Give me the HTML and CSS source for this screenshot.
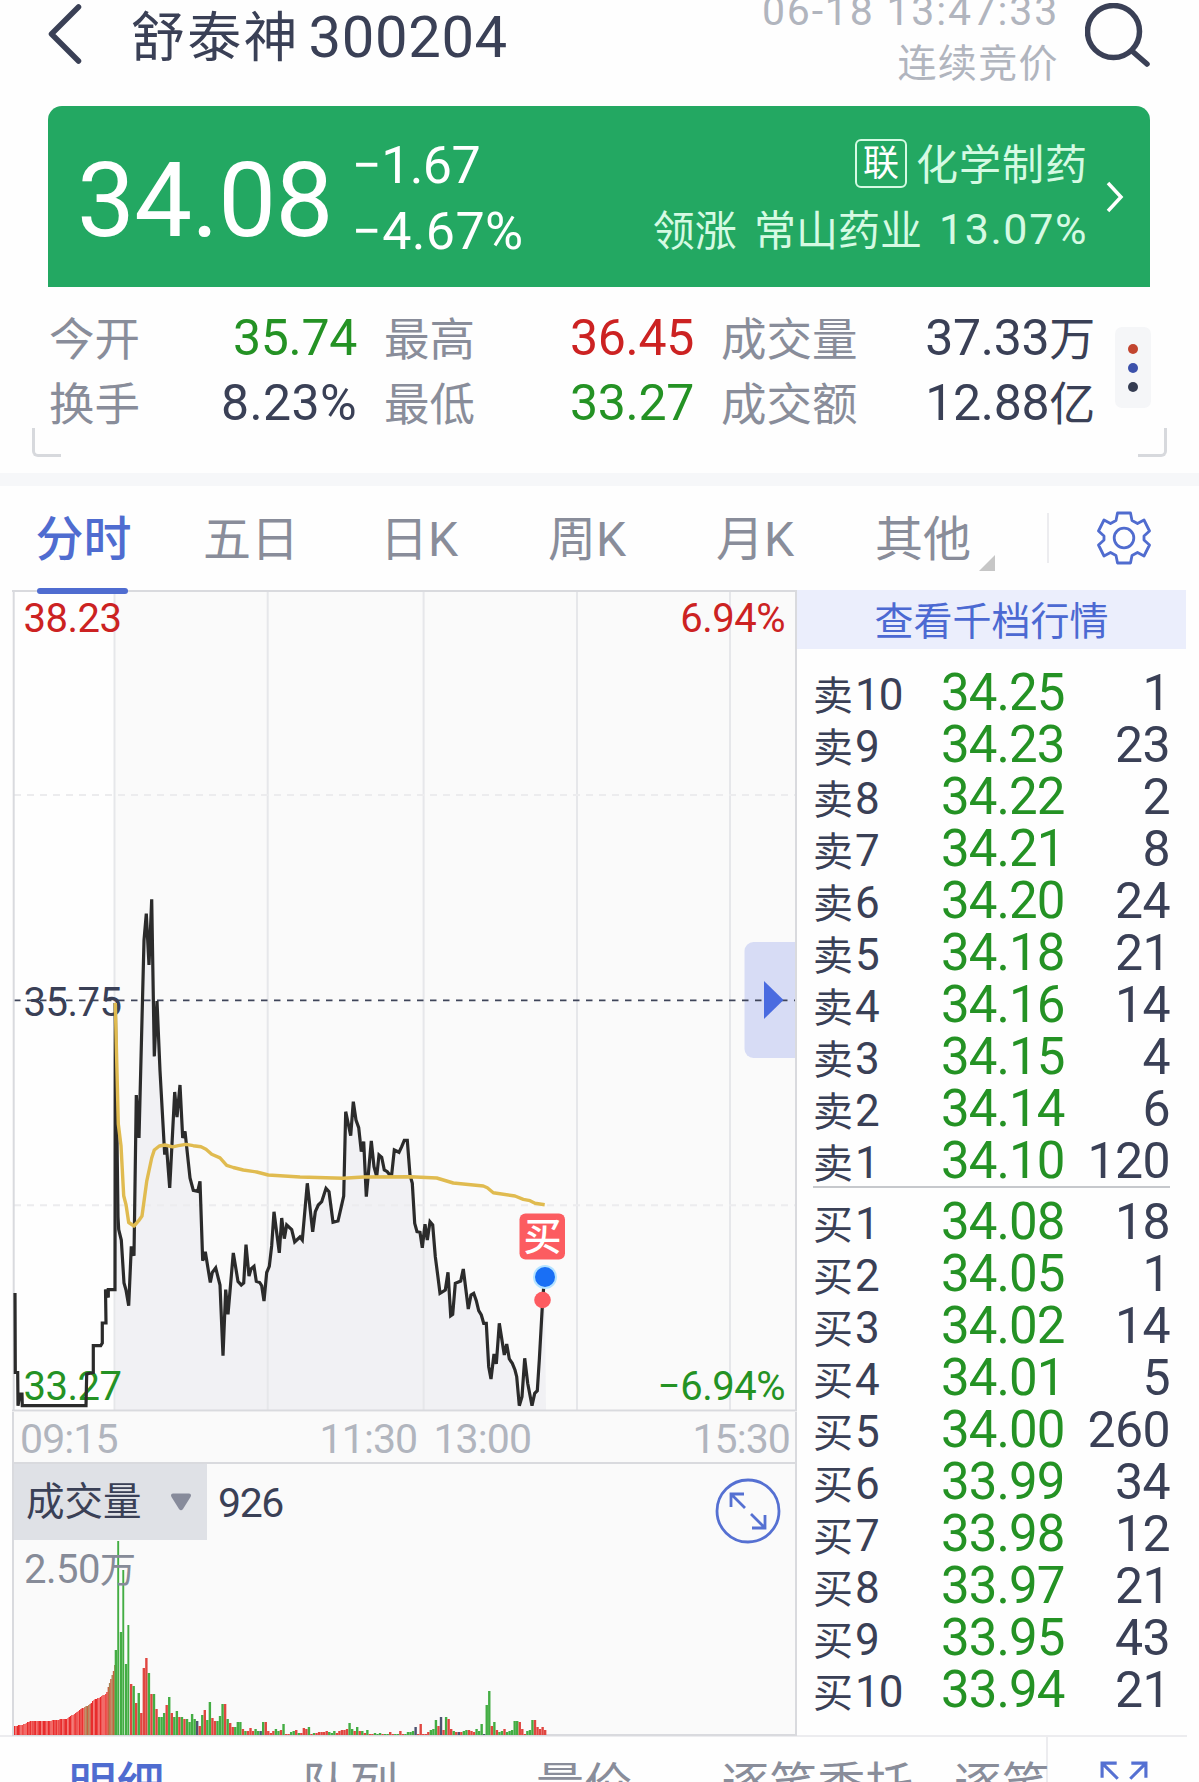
FILE: index.html
```html
<!DOCTYPE html>
<html lang="zh-CN">
<head>
<meta charset="UTF-8">
<meta name="viewport" content="width=device-width, initial-scale=1.0">
<title>舒泰神 300204</title>
<link rel="stylesheet" href="styles.css">
</head>
<body>
	<header class="header">
		<svg class="back" viewBox="0 0 34 60"><path d="M31 3 L4 30 L31 57"/></svg>
		<h1><span class="name">舒泰神</span><span class="code">300204</span></h1>
		<div class="status">
			<div class="time">06-18 13:47:33</div>
			<div class="phase">连续竞价</div>
		</div>
		<svg class="search" viewBox="0 0 66 64"><ellipse cx="28.5" cy="28.5" rx="26" ry="26"/><path d="M47 48 L62 61"/></svg>
	</header>

	<section class="banner">
		<div class="price">34.08</div>
		<div class="change">
			<div>−1.67</div>
			<div class="percent">−4.67%</div>
		</div>
		<div class="industry">
			<div class="industry-name"><span class="badge">联</span>化学制药</div>
			<div class="leader"><span>领涨</span><span>常山药业</span><span class="pct">13.07%</span></div>
		</div>
		<svg class="arrow" viewBox="0 0 18 32"><path d="M2 2 L15 16 L2 30"/></svg>
	</section>

	<section class="summary">
		<div class="stats">
			<div class="stat"><span>今开</span><b class="down">35.74</b></div>
			<div class="stat"><span>最高</span><b class="up">36.45</b></div>
			<div class="stat"><span>成交量</span><b>37.33<i>万</i></b></div>
			<div class="stat"><span>换手</span><b class="rate">8.23%</b></div>
			<div class="stat"><span>最低</span><b class="down">33.27</b></div>
			<div class="stat"><span>成交额</span><b>12.88<i>亿</i></b></div>
		</div>
		<div class="more"><i class="dot red"></i><i class="dot blue"></i><i class="dot dark"></i></div>
	</section>
	<div class="corners"><span class="corner left"></span><span class="corner right"></span></div>

	<nav class="tabs">
		<div class="tab active">分时</div>
		<div class="tab">五日</div>
		<div class="tab">日K</div>
		<div class="tab">周K</div>
		<div class="tab">月K</div>
		<div class="tab other">其他</div>
		<div class="settings">
			<svg viewBox="0 0 54 54">
				<path d="M20.5 2 H33.5 L35 9.5 L40.5 12.5 L47 9 L52.5 20 L47 25 V29 L52.5 34 L47 45 L40.5 41.5 L35 44.5 L33.5 52 H20.5 L19 44.5 L13.5 41.5 L7 45 L1.5 34 L7 29 V25 L1.5 20 L7 9 L13.5 12.5 L19 9.5 Z"/>
				<circle cx="27" cy="27" r="9.8"/>
			</svg>
		</div>
	</nav>

	<main class="main">
		<div class="charts">
			<svg class="price-chart" viewBox="12 590 785 822">
				<rect x="115" y="591" width="681" height="820" fill="#fafafa"/>
				<polygon class="area" id="area"/>
				<path class="grid" d="M114.5 591V1410 M267.7 591V1410 M423.6 591V1410 M577 591V1410 M730 591V1410"/>
				<path class="grid-dash" d="M14 795H795 M14 1205.3H795"/>
				<rect x="744.5" y="942" width="62" height="116" rx="9" fill="#d7dcf5"/>
				<path class="middle" d="M14 1000.4H795"/>
				<path d="M764 981 L783.5 1000 L764 1019 Z" fill="#4a6be0"/>
				<text class="up" x="23.5" y="632">38.23</text>
				<text class="up" x="785" y="632" text-anchor="end">6.94%</text>
				<text class="flat" x="23.5" y="1016.3">35.75</text>
				<text class="down" x="23.5" y="1399.5">33.27</text>
				<text class="down" x="785" y="1399.5" text-anchor="end">−6.94%</text>
				<path class="frame" d="M12 591H796V1410.5H12 M13.7 591V1410"/>
				<polyline class="line" points="15,1293 15.3,1372.5 17.7,1372.5 18,1405.7 20,1394 22,1394 22.3,1405.7 86,1405.7 86.7,1374 93.3,1372.5 93.3,1345.7 100.7,1345.7 102.3,1343 102.3,1323 106,1323 105.5,1289.6 108.3,1297.5 108.3,1289.6 115,1289.6 115.3,1003"/>
				<polyline class="line" id="price" points="115.3,1003 118,1217 118.7,1229.6 121.3,1240 124,1283 126,1290 128.7,1305.7 131.3,1246.4 134,1255.7 136.3,1095 139,1137.9 144,940.4 146.3,913.6 149,965 151.7,899.3 154.3,1056.4 157,1001 160,1070.7 164.7,1154.6 166.3,1144 169.7,1187.9 174.7,1092 177,1117 180,1085 182.7,1137.9 185,1131.4 190,1177.9 193.3,1190.4 197.7,1191.4 200,1181.4 202.7,1260.7 205.3,1251.8 210.3,1282.5 212.3,1272.5 215.7,1267.9 220,1285 223,1355.7 225.7,1289.6 228,1314.3 233.3,1252.9 238,1281.4 241.3,1285 243.7,1283 246,1244.6 249,1276 251,1269 254,1266.4 256.3,1281.4 259.7,1282.5 261.7,1285.7 264,1301 266.7,1272.5 269.3,1266.4 271.7,1245.7 274,1211.8 279.3,1252.9 281.7,1218 284.3,1238.6 286.7,1225 291.7,1229.6 294.7,1242 300,1237 302.3,1240 307.3,1183.3 312.7,1231.7 315.3,1211.7 318.3,1205 321.7,1201.7 326,1188.3 329,1191.7 333,1222.3 338,1221 341.3,1206.7 343.7,1196 345.7,1111.7 350.7,1135.7 353.3,1101.7 356,1120 358.7,1127.7 361.3,1151.7 363.7,1141.7 366.3,1196.7 371.3,1141 374,1166.7 376.7,1176.7 379,1155 381.7,1157.3 384.3,1170 387.3,1171.7 389.3,1174.3 391.7,1174.3 394.3,1150 399,1152.3 401.7,1146.7 404.3,1140.3 407.3,1140.3 410,1175 412.3,1183.3 414.7,1223.3 417,1231.7 420,1232.3 422.3,1247.7 425,1224.3 427.3,1240 430,1221.7 432.7,1225 435.3,1256.7 437.7,1275 440,1293.3 445.3,1290 448,1272.3 450.7,1315.7 452.7,1314.3 455.3,1283.3 460.7,1281 463.3,1269 468.3,1309 471,1295 473.7,1293.3 476.3,1300.7 478.7,1310.7 481.3,1315 483.7,1323.3 486.3,1323.3 488.7,1366.7 491,1379 494,1354 496.3,1364 499.3,1323.3 504.3,1355 506.7,1344 509.3,1359 512.3,1363.3 515,1370 516.7,1376.7 519.3,1405.7 522,1396.7 524.7,1358.3 527.7,1383.3 532,1405.7 534.7,1393.3 537.3,1390.7 539.3,1360 542.3,1306.7 543.7,1286.7 544.7,1276.7"/>
				<polyline class="average" points="115.3,1003 116.7,1060 118.3,1124 121,1145.7 123.7,1195.7 126,1204.6 128.7,1222.5 134,1226 138.7,1220.7 142,1216 146.7,1181.4 151.7,1158 154.3,1150 159.3,1146 165,1145 172.7,1146.8 178.3,1145.7 186,1144.3 193.3,1145.7 201,1146.8 206,1149.3 211.7,1154.3 220,1157.9 226.7,1165.4 233.3,1167.5 243.3,1170 256.7,1172 268.3,1175 300,1177 343.3,1178.3 363.3,1177 410,1176.7 436.7,1178 453.3,1183 483.3,1186 487.3,1187.7 493.3,1192.7 515,1196 523.3,1199.3 530,1200.7 535,1203.3 544.7,1204.7"/>
				<circle cx="545" cy="1277" r="12" fill="#b5e3ff"/>
				<circle cx="545" cy="1277" r="10" fill="#196ff5"/>
				<circle cx="542.5" cy="1300" r="8.3" fill="#fd5b60"/>
				<rect x="519.5" y="1213.5" width="45.5" height="46" rx="6" fill="#fc5c60"/>
				<text class="buy" x="542.5" y="1250" text-anchor="middle">买</text>
			</svg>

			<div class="axis">
				<span>09:15</span>
				<span class="noon">11:30 13:00</span>
				<span>15:30</span>
			</div>

			<div class="volume">
				<div class="volume-bar">
					<div class="picker">成交量
						<svg viewBox="0 0 22 18"><path d="M3 0.5 H19 Q22 1 20.5 4 L13 16 Q11 18.5 9 16 L1.5 4 Q0 1 3 0.5 Z"/></svg>
					</div>
					<span class="amount">926</span>
					<svg class="expand" viewBox="0 0 66 66">
						<circle cx="33" cy="33" r="31"/>
						<path d="M30 30 L16.5 16.5 M16 29 V16 H29 M36 36 L49.5 49.5 M37 50 H50 V37"/>
					</svg>
				</div>
				<svg class="volume-chart" viewBox="12 1541 785 196">
					<g id="bars"></g>
					<text x="24" y="1582.5">2.50<tspan class="unit">万</tspan></text>
				</svg>
			</div>
		</div>

		<aside class="book">
			<div class="book-title">查看千档行情</div>
			<div class="orders sell">
				<div class="order"><span>卖<b>10</b></span><em>34.25</em><strong>1</strong></div>
				<div class="order"><span>卖<b>9</b></span><em>34.23</em><strong>23</strong></div>
				<div class="order"><span>卖<b>8</b></span><em>34.22</em><strong>2</strong></div>
				<div class="order"><span>卖<b>7</b></span><em>34.21</em><strong>8</strong></div>
				<div class="order"><span>卖<b>6</b></span><em>34.20</em><strong>24</strong></div>
				<div class="order"><span>卖<b>5</b></span><em>34.18</em><strong>21</strong></div>
				<div class="order"><span>卖<b>4</b></span><em>34.16</em><strong>14</strong></div>
				<div class="order"><span>卖<b>3</b></span><em>34.15</em><strong>4</strong></div>
				<div class="order"><span>卖<b>2</b></span><em>34.14</em><strong>6</strong></div>
				<div class="order"><span>卖<b>1</b></span><em>34.10</em><strong>120</strong></div>
			</div>
			<div class="orders">
				<div class="order"><span>买<b>1</b></span><em>34.08</em><strong>18</strong></div>
				<div class="order"><span>买<b>2</b></span><em>34.05</em><strong>1</strong></div>
				<div class="order"><span>买<b>3</b></span><em>34.02</em><strong>14</strong></div>
				<div class="order"><span>买<b>4</b></span><em>34.01</em><strong>5</strong></div>
				<div class="order"><span>买<b>5</b></span><em>34.00</em><strong>260</strong></div>
				<div class="order"><span>买<b>6</b></span><em>33.99</em><strong>34</strong></div>
				<div class="order"><span>买<b>7</b></span><em>33.98</em><strong>12</strong></div>
				<div class="order"><span>买<b>8</b></span><em>33.97</em><strong>21</strong></div>
				<div class="order"><span>买<b>9</b></span><em>33.95</em><strong>43</strong></div>
				<div class="order"><span>买<b>10</b></span><em>33.94</em><strong>21</strong></div>
			</div>
		</aside>
	</main>

	<nav class="bottom-tabs">
		<div class="tab active">明细</div>
		<div class="tab">队列</div>
		<div class="tab">量价</div>
		<div class="tab">逐笔委托</div>
		<div class="tab cut">逐笔</div>
		<svg class="full" viewBox="0 0 46 46"><path d="M2 16 V2 H16 M2 2 L17 17 M30 2 H44 V16 M44 2 L29 17 M2 30 V44 H16 M2 44 L17 29 M30 44 H44 V30 M44 44 L29 29"/></svg>
	</nav>

	<script src="script.js"></script>
</body>
</html>
```

FILE: styles.css
```css
* {
    box-sizing: border-box;
}

body {
    margin: 0;
    width: 1199px;
    height: 1782px;
    overflow: hidden;
    background: #fefefe;
    color: #3a4056;
    font-family: Roboto, "Noto Sans CJK SC", sans-serif;
}

svg {
    display: block;
}

b, i, em, strong {
    font-style: normal;
    font-weight: 400;
}

.up {
    color: #cc2222;
    fill: #cc2222;
}

.down {
    color: #249224;
    fill: #249224;
}

.flat {
    fill: #3a4056;
}

/* header */
.header {
    display: flex;
    height: 106px;
    padding: 0 48px 0 47px;
}

.back {
    width: 35px;
    height: 60px;
    margin-top: 4px;
}

.back path, .search path, .search ellipse {
    fill: none;
    stroke: #3a4056;
    stroke-width: 5.5;
    stroke-linecap: round;
    stroke-linejoin: round;
}

h1 {
    display: flex;
    margin: 0 0 0 49px;
    font-weight: 400;
    line-height: 74px;
}

.name {
    padding-top: 2px;
    font-size: 54px;
    letter-spacing: 2.2px;
}

.code {
    margin-left: 9px;
    font-size: 58px;
    letter-spacing: 0.6px;
}

.status {
    margin: -11px 26px 0 auto;
    color: #b1b5be;
    text-align: right;
}

.time {
    font-size: 41px;
    line-height: 44px;
    letter-spacing: 1.8px;
}

.phase {
    font-size: 39px;
    line-height: 62px;
    letter-spacing: 1.4px;
}

.search {
    width: 66px;
    height: 64px;
    margin-top: 3px;
}

/* green quote banner */
.banner {
    display: flex;
    height: 181px;
    margin: 0 49px 0 48px;
    padding-left: 29px;
    border-radius: 14px 14px 0 0;
    background: #23a862;
    color: #fff;
}

.price {
    width: 275px;
    font-size: 103px;
    line-height: 189px;
    letter-spacing: -0.6px;
}

.change {
    padding-top: 27px;
    font-size: 52px;
    line-height: 66px;
    letter-spacing: -0.6px;
}

.percent {
    letter-spacing: 0.4px;
}

.industry {
    flex: 1;
    padding-top: 22px;
    color: #d5fae3;
    font-size: 42px;
    letter-spacing: 1px;
}

.industry-name, .leader {
    display: flex;
    justify-content: flex-end;
    align-items: center;
    height: 66px;
}

.badge {
    width: 52px;
    height: 49px;
    margin: 4px 9px 0 0;
    border: 2px solid #d5fae3;
    border-radius: 6px;
    color: #fff;
    font-size: 36px;
    line-height: 47px;
    letter-spacing: 0;
    text-align: center;
}

.leader {
    letter-spacing: 0;
}

.leader span + span {
    margin-left: 17px;
}

.leader .pct {
    padding-top: 3px;
    font-size: 43px;
    letter-spacing: 1.6px;
}

.arrow {
    width: 18px;
    height: 32px;
    margin: 75px 26px 0 18px;
}

.arrow path {
    fill: none;
    stroke: #fff;
    stroke-width: 3.5;
}

/* numbers under the banner */
.summary {
    display: flex;
    height: 141px;
    padding: 18px 0 0 49px;
}

.stats {
    display: grid;
    grid-template-columns: 308px 310px 374px;
    grid-template-rows: 65px 65px;
    column-gap: 27px;
    line-height: 67px;
}

.stat {
    display: flex;
    justify-content: space-between;
    white-space: nowrap;
}

.stat span {
    padding-top: 2px;
    color: #898d9a;
    font-size: 45.5px;
}

.stat b {
    font-size: 50px;
    letter-spacing: -0.3px;
}

.stat .rate {
    letter-spacing: 0.4px;
}

.stat i {
    font-size: 46px;
}

.more {
    display: flex;
    flex-direction: column;
    align-items: center;
    justify-content: center;
    gap: 9px;
    width: 36px;
    height: 81px;
    margin: 22px 0 0 20px;
    border-radius: 7px;
    background: #f5f6f8;
}

.dot {
    width: 10px;
    height: 10px;
    border-radius: 50%;
}

.red {
    background: #c2452f;
}

.blue {
    background: #3c51ab;
}

.dark {
    background: #353c52;
}

.corners {
    display: flex;
    justify-content: space-between;
    height: 58px;
    padding: 0 32px;
    border-bottom: 13px solid #f6f7f9;
}

.corner {
    width: 29px;
    height: 29px;
    border: 3px solid #d7d9dd;
    border-top: 0;
}

.left {
    border-right: 0;
    border-radius: 0 0 0 6px;
}

.right {
    border-left: 0;
    border-radius: 0 0 6px 0;
}

/* period tabs */
.tabs {
    display: grid;
    grid-template-columns: 167px repeat(5, 168px) 1fr;
    height: 104px;
}

.tab {
    color: #898d9a;
    font-size: 48px;
    line-height: 108px;
    text-align: center;
    white-space: nowrap;
}

.tab.active {
    color: #4f6cd0;
    font-weight: 500;
}

.tabs .active {
    position: relative;
}

.tabs .active::after {
    content: "";
    position: absolute;
    left: 37px;
    bottom: 0;
    width: 91px;
    height: 6px;
    border-radius: 3px;
    background: #4f6cd0;
}

.other {
    position: relative;
}

.other::after {
    content: "";
    position: absolute;
    right: 12px;
    top: 69px;
    border-left: 16px solid transparent;
    border-bottom: 16px solid #c6c6c6;
}

.settings {
    align-self: start;
    height: 50px;
    margin: 27px 0 0 40px;
    padding-left: 48px;
    border-left: 2px solid #ececef;
}

.settings svg {
    width: 54px;
    height: 54px;
    margin-top: -2px;
}

.settings path, .settings circle {
    fill: none;
    stroke: #506ccf;
    stroke-width: 2.8;
    stroke-linejoin: round;
}

/* charts */
.main {
    display: flex;
    height: 1145px;
    padding-left: 12px;
}

.charts {
    width: 785px;
}

.charts text {
    font-size: 40px;
    letter-spacing: -0.5px;
}

.price-chart {
    width: 785px;
    height: 822px;
}

.grid, .grid-dash, .frame {
    fill: none;
    stroke: #e6e7ea;
    stroke-width: 2;
}

.grid-dash {
    stroke: #ececee;
    stroke-dasharray: 7 6;
}

.frame {
    stroke: #d9dade;
}

.middle {
    fill: none;
    stroke: #3f455a;
    stroke-width: 1.6;
    stroke-dasharray: 6.5 6.5;
}

.area {
    fill: #f1f1f4;
}

.line {
    fill: none;
    stroke: #2b2b2b;
    stroke-width: 3.2;
}

.average {
    fill: none;
    stroke: #e0bb50;
    stroke-width: 3.4;
    stroke-linejoin: round;
}

.charts .buy {
    fill: #fff;
    font-size: 38px;
    font-weight: 500;
    letter-spacing: 0;
}

.axis {
    display: flex;
    height: 50px;
    padding: 0 5px 0 6px;
    border-left: 2px solid #d9dade;
    border-right: 2px solid #d9dade;
    background: #fafafa;
    color: #b1b5be;
    font-size: 41px;
    line-height: 54px;
    letter-spacing: -0.9px;
}

.noon {
    margin: 0 auto 0 202px;
    word-spacing: 7px;
}

.volume {
    height: 274px;
    border: 2px solid #d9dade;
    background: #fafafa;
}

.volume-bar {
    display: flex;
    height: 77px;
}

.picker {
    display: flex;
    align-items: center;
    width: 193px;
    height: 76px;
    padding-left: 12px;
    background: #dfe1e6;
    font-size: 38.5px;
    line-height: 72px;
}

.picker svg {
    width: 22px;
    height: 18px;
    margin-left: 28px;
    fill: #878b9b;
}

.amount {
    margin-left: 11px;
    font-size: 41px;
    line-height: 79px;
    letter-spacing: -1.4px;
}

.expand {
    width: 66px;
    height: 66px;
    margin: 14px 14px 0 auto;
    fill: none;
    stroke: #5570d2;
    stroke-width: 2.8;
}

.volume-chart {
    width: 785px;
    height: 196px;
    margin-left: -2px;
}

.volume-chart text {
    fill: #868b98;
}

.charts .unit {
    font-size: 36px;
}

/* order book */
.book {
    width: 389px;
}

.book-title {
    height: 59px;
    background: #ebeefc;
    color: #4c69d2;
    font-size: 39px;
    line-height: 64px;
    text-align: center;
}

.orders {
    width: 357px;
    margin-left: 16px;
    padding-top: 8px;
}

.sell {
    height: 539px;
    padding-top: 18px;
    border-bottom: 2px solid #c6c8cc;
}

.order {
    display: grid;
    grid-template-columns: 128px 124px 105px;
    height: 52px;
    line-height: 52px;
    white-space: nowrap;
}

.order span {
    padding-top: 2px;
    font-size: 40px;
}

.order b {
    margin-left: 2px;
    font-size: 44px;
    letter-spacing: -1px;
}

.order em {
    color: #249224;
    font-size: 51px;
    letter-spacing: -0.9px;
}

.order strong {
    font-size: 50px;
    letter-spacing: -0.6px;
    text-align: right;
}

/* bottom tabs */
.bottom-tabs {
    display: grid;
    grid-template-columns: 233px 234px 234px 233px 114px 1fr;
    width: 1187px;
    border-top: 2px solid #ececef;
}

.bottom-tabs .tab {
    font-size: 48px;
    line-height: 97px;
}

.bottom-tabs .cut {
    padding-left: 20px;
    border-right: 2px solid #ececef;
}

.full {
    width: 48px;
    height: 48px;
    margin: 24px 0 0 52px;
    fill: none;
    stroke: #5570d2;
    stroke-width: 3;
}
```

FILE: script.js
```javascript
const SVG = "http://www.w3.org/2000/svg";
const BASE = 1735;
const colors = { r: "#e04640", g: "#43ad43", n: "#4d5370" };
const bars = document.getElementById("bars");

// fill under the price line
const price = document.getElementById("price").getAttribute("points");
document.getElementById("area").setAttribute("points", price + " 546,1410 115.3,1410");

function drawBar(x, width, height, color) {
	const rect = document.createElementNS(SVG, "rect");
	rect.setAttribute("x", x.toFixed(2));
	rect.setAttribute("y", BASE - height);
	rect.setAttribute("width", width);
	rect.setAttribute("height", height);
	rect.setAttribute("fill", color);
	bars.appendChild(rect);
}

// call auction, [x, height]
const auction = [[14, 9], [20, 10], [25, 11], [29, 14], [50, 14], [52, 15], [66, 16], [70, 19], [75, 22], [80, 26],
	[86, 29], [90, 31], [93, 35], [100, 38], [106, 42], [108, 50], [112, 61], [115, 74]];

let k = 0;
for (let x = 14; x < 115; x += 1.3) {
	while (k < auction.length - 2 && auction[k + 1][0] <= x) k++;
	const [x1, h1] = auction[k];
	const [x2, h2] = auction[k + 1];
	const h = Math.round(h1 + (h2 - h1) * (x - x1) / (x2 - x1));
	let color = k % 3 == 1 ? "#ee4a48" : "#e82c2c";
	if (Math.round(x / 1.3) % 4 == 0) color = "#f26a66";
	if ((x > 84 && x < 90) || x > 107) color = Math.round(x / 1.3) % 2 ? "#c8603f" : "#a8814f";
	drawBar(x, 1.4, h, color);
}

// one bar a minute from 09:30
const minutes = "85g 194g 103g 165g 71g 110g 51r 49g 32r 42g 22r 67r 77r 62g 41r 41g 26r 18g 18g 22g 30r 38g 22r 18g 24g 18r 18g 16r 16g 13g " +
	"21g 16g 14n 9r 20g 25r 15g 33g 17r 14r 14g 19g 31g 31r 16g 12r 8r 8g 13g 13g 6r 4g 4r 7r 4r 6g 4g 4n 13g 13r " +
	"4r 2r 4r 6g 4g 5r 11g 1r 1r 3g 4g 5r 2g 2r 7r 6r 8g 1r 2g 2r 3r 3r 3r 4r 3g 2g 4g 2r 4r 5r " +
	"5r 6r 12g 6g 4r 8g 4r 4g 2r 5g 1r 1r 2g 1g 2g 1r 1g 1g 3r 1r 1g 1g 4r 1r 1g 3g 3g 4g 8n 1r " +
	"11r 1r 1r 3r 5g 6g 15g 9r 18n 5r 18g 16r 6r 4g 3r 3n 3r 4g 5g 5r 4r 3r 6g 4g 11g 1n 30g 44g 9r 13g " +
	"5r 3g 4g 6r 3g 4g 5g 14g 14g 13r 6r 1r 4g 5g 15g 15r 8r 6r 8r 5r";

minutes.split(" ").forEach((item, i) => {
	const h = parseInt(item);
	drawBar(114.7 + i * 2.54, h > 100 && i != 2 ? 1.9 : 2.4, h, colors[item.slice(-1)]);
});
```
